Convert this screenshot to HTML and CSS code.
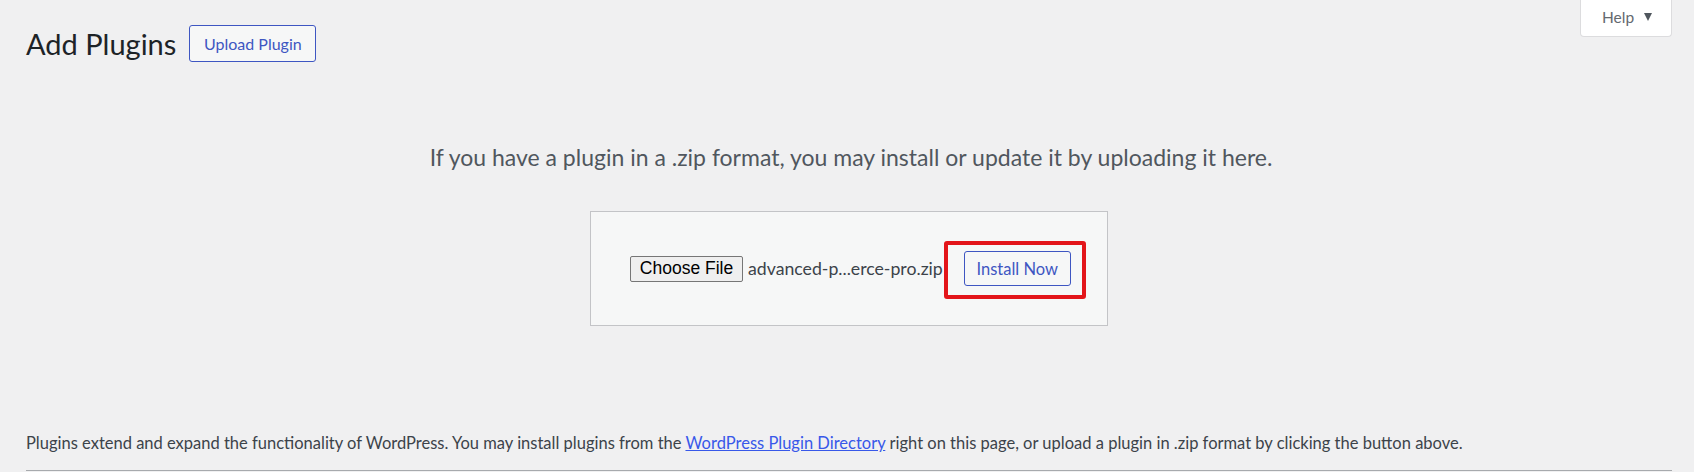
FILE: index.html
```html
<!DOCTYPE html>
<html lang="en">
<head>
<meta charset="utf-8">
<title>Add Plugins</title>
<link rel="stylesheet" href="styles.css">
</head>
<body>
<div class="page">
  <div class="screen-meta-links">
    <button class="help-tab" type="button">Help <span class="caret"></span></button>
  </div>
  <div class="header">
    <h1 class="title">Add Plugins</h1>
    <button class="btn-outline upload-btn" type="button">Upload Plugin</button>
  </div>

  <div class="upload-section">
    <p class="install-help">If you have a plugin in a .zip format, you may install or update it by uploading it here.</p>
    <form class="upload-form">
      <span class="file-btn">Choose File</span>
      <span class="file-name">advanced-p...erce-pro.zip</span>
      <span class="highlight">
        <button class="btn-outline install-btn" type="button">Install Now</button>
      </span>
    </form>
  </div>

  <p class="footer-note">Plugins extend and expand the functionality of WordPress. You may install plugins from the <a href="#">WordPress Plugin Directory</a> right on this page, or upload a plugin in .zip format by clicking the button above.</p>
  <div class="rule"></div>
</div>
</body>
</html>
```

FILE: styles.css
```css
html, body {
  margin: 0;
  padding: 0;
}

body {
  background: #f0f0f1;
  font-family: Lato, "Open Sans", "Liberation Sans", sans-serif;
  color: #3c434a;
}

.page {
  padding: 0 22px 0 26px;
}

.screen-meta-links {
  float: right;
}

.help-tab {
  display: flex;
  align-items: center;
  width: 92px;
  height: 37px;
  padding: 0 0 3px 21px;
  box-sizing: border-box;
  background: #fff;
  border: 1px solid #dcdcde;
  border-top: none;
  border-radius: 0 0 4px 4px;
  font-family: inherit;
  font-size: 15.5px;
  color: #646970;
}

.caret {
  display: inline-block;
  width: 0;
  height: 0;
  margin-left: 10px;
  border-left: 4.5px solid transparent;
  border-right: 4.5px solid transparent;
  border-top: 8px solid #50575e;
}

.header {
  display: flex;
  align-items: center;
  padding-top: 25px;
}

.title {
  margin: 0 13px 0 0;
  font-size: 29px;
  font-weight: 400;
  line-height: 37px;
  color: #1d2327;
}

.btn-outline {
  box-sizing: border-box;
  background: #f6f7f7;
  border: 1px solid #3e56c2;
  border-radius: 3px;
  color: #3e56c2;
  font-family: inherit;
  padding: 0;
}

.upload-btn {
  width: 127px;
  height: 37px;
  font-size: 16px;
}

.upload-section {
  display: flex;
  flex-direction: column;
  align-items: center;
}

.install-help {
  margin: 82px 0 40px 4px;
  font-size: 23px;
  line-height: 27px;
  color: #50575e;
}

.upload-form {
  display: flex;
  align-items: center;
  box-sizing: border-box;
  width: 518px;
  height: 115px;
  margin: 0;
  padding: 0 0 0 39px;
  background: #f6f7f7;
  border: 1px solid #c3c4c7;
}

.file-btn {
  box-sizing: border-box;
  display: inline-flex;
  align-items: center;
  justify-content: center;
  width: 113px;
  height: 26px;
  background: #efefef;
  border: 1px solid #767676;
  border-radius: 2px;
  font-family: "Liberation Sans", Arial, sans-serif;
  font-size: 17.5px;
  color: #000;
}

.file-name {
  margin-left: 5px;
  font-size: 17.7px;
  color: #3c434a;
}

.highlight {
  display: inline-flex;
  margin: 3px 0 0 1px;
  padding: 6px 11px 9px 16px;
  border: 4px solid #e3151a;
  border-radius: 3px;
}

.install-btn {
  width: 107px;
  height: 35px;
  font-size: 16.5px;
}

.footer-note {
  margin: 107px 0 0 0;
  font-size: 16.5px;
  line-height: 21px;
  color: #3c434a;
}

.footer-note a {
  color: #3858e9;
  text-decoration: underline;
}

.rule {
  margin-top: 16px;
  border-top: 1px solid #a7aaad;
}
```
